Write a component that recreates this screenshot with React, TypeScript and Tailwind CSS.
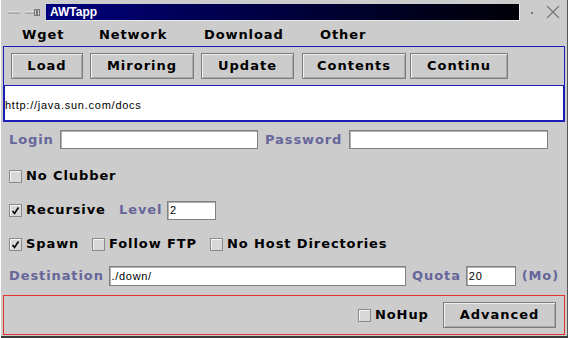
import React from "react";

const lbl = "text-[13px] font-bold text-[#66669a] tracking-[0.9px]";
const txt = "text-[13px] font-bold text-black tracking-[0.9px]";
const field =
  "bg-white border border-[#808080] shadow-[inset_1px_1px_0_#b0b0b0] font-['Liberation_Sans',sans-serif] text-[11px] tracking-[0.7px] text-black pl-[2px] flex items-center";

const Check = ({ on }: { on?: boolean }) => (
  <span className="w-[13px] h-[13px] border border-[#8a8a8a] bg-[#d8d8d8] shadow-[inset_1px_1px_0_#f4f4f4] flex items-center justify-center shrink-0">
    {on && (
      <svg width="9" height="9" viewBox="0 0 9 9">
        <path d="M1.5 5 L3.5 7.5 L7.5 1.5" stroke="#000" strokeWidth="1.6" fill="none" />
      </svg>
    )}
  </span>
);

const Btn = ({ label, w }: { label: string; w: string }) => (
  <div
    className={`${w} h-[26px] border border-[#7c7c7c] shadow-[inset_1px_1px_0_#f0f0f0,inset_-1px_-1px_0_#a8a8a8] flex items-center justify-center text-[13px] font-bold tracking-[1px]`}
  >
    {label}
  </div>
);

export default function App() {
  return (
    <div className="w-[568px] h-[338px] bg-[#cccccc] font-['DejaVu_Sans',sans-serif] overflow-hidden flex flex-col shadow-[inset_1px_0_0_#ffffff,inset_0_-2px_0_#3a3a3a,inset_-1px_0_0_#555]">
      {/* title bar */}
      <div className="h-[22px] flex items-start shrink-0">
        <div className="w-[46px] h-[22px] flex items-center">
          <svg width="46" height="22" viewBox="0 0 46 22">
            <line x1="8" y1="12" x2="20" y2="12" stroke="#f4f4f4" strokeWidth="1" />
            <line x1="8" y1="13" x2="20" y2="13" stroke="#8a8a8a" strokeWidth="1" />
            <line x1="25" y1="12" x2="34" y2="12" stroke="#f4f4f4" strokeWidth="1" />
            <line x1="25" y1="13" x2="34" y2="13" stroke="#8a8a8a" strokeWidth="1" />
            <rect x="34.5" y="9.5" width="2" height="6" fill="none" stroke="#777" />
            <rect x="37.5" y="9.5" width="2" height="6" fill="none" stroke="#777" />
          </svg>
        </div>
        <div className="mt-[4px] w-[474px] h-[17px] bg-gradient-to-r from-[#000080] to-[#000008] border-r border-b border-[#e8e8e8] flex items-center pl-[4px] text-white font-['Liberation_Sans',sans-serif] font-bold text-[12px]">
          AWTapp
        </div>
        <div className="flex-1 h-[22px]">
          <svg width="48" height="22" viewBox="0 0 48 22">
            <rect x="11" y="12" width="2" height="2" fill="#777" />
            <line x1="27" y1="6" x2="39" y2="18" stroke="#7a7a7a" strokeWidth="1.3" />
            <line x1="39" y1="6" x2="27" y2="18" stroke="#7a7a7a" strokeWidth="1.3" />
          </svg>
        </div>
      </div>

      {/* menu bar */}
      <div className={`h-[24px] flex items-center pt-[2px] pl-[22px] ${txt} shrink-0`}>
        <span className="w-[77px]">Wget</span>
        <span className="w-[105px]">Network</span>
        <span className="w-[116px]">Download</span>
        <span>Other</span>
      </div>

      {/* toolbar panel */}
      <div className="mx-[3px] h-[40px] border border-[#1c1cb8] flex items-center pl-[7px] shrink-0">
        <Btn label="Load" w="w-[72px]" />
        <div className="w-[7px]" />
        <Btn label="Miroring" w="w-[104px]" />
        <div className="w-[7px]" />
        <Btn label="Update" w="w-[93px]" />
        <div className="w-[8px]" />
        <Btn label="Contents" w="w-[104px]" />
        <div className="w-[4px]" />
        <Btn label="Continu" w="w-[98px]" />
      </div>

      {/* url */}
      <div className="mx-[3px] h-[36px] bg-white border-l-2 border-r-2 border-b-2 border-[#1c1cb8] flex items-center pt-[4px] font-['Liberation_Sans',sans-serif] text-[11px] tracking-[0.75px] shrink-0">
        http://java.sun.com/docs
      </div>

      {/* form */}
      <div className="px-[9px] flex flex-col shrink-0">
        <div className="mt-[8px] h-[19px] flex items-center">
          <span className={`${lbl} w-[51px]`}>Login</span>
          <div className={`${field} w-[198px] h-[19px]`} />
          <span className={`${lbl} ml-[7px] w-[84px]`}>Password</span>
          <div className={`${field} w-[199px] h-[19px]`} />
        </div>

        <div className="mt-[17px] h-[20px] flex items-center">
          <Check />
          <span className={`${txt} ml-[4px]`}>No Clubber</span>
        </div>

        <div className="mt-[14px] h-[20px] flex items-center">
          <Check on />
          <span className={`${txt} ml-[4px] w-[93px]`}>Recursive</span>
          <span className={`${lbl} w-[48px]`}>Level</span>
          <div className={`${field} w-[49px] h-[19px]`}>2</div>
        </div>

        <div className="mt-[14px] h-[20px] flex items-center">
          <Check on />
          <span className={`${txt} ml-[4px] w-[66px]`}>Spawn</span>
          <Check />
          <span className={`${txt} ml-[4px] w-[101px]`}>Follow FTP</span>
          <Check />
          <span className={`${txt} ml-[4px]`}>No Host Directories</span>
        </div>

        <div className="mt-[12px] h-[20px] flex items-center">
          <span className={`${lbl} w-[100px]`}>Destination</span>
          <div className={`${field} w-[299px] h-[20px]`}>./down/</div>
          <span className={`${lbl} ml-[6px] w-[54px]`}>Quota</span>
          <div className={`${field} w-[50px] h-[20px]`}>20</div>
          <span className={`${lbl} ml-[6px]`}>(Mo)</span>
        </div>
      </div>

      {/* bottom panel */}
      <div className="mt-[9px] mx-[3px] h-[40px] border border-[#e03030] flex items-center justify-end pr-[8px] shrink-0">
        <Check />
        <span className={`${txt} ml-[4px] w-[68px]`}>NoHup</span>
        <Btn label="Advanced" w="w-[113px]" />
      </div>
    </div>
  );
}
